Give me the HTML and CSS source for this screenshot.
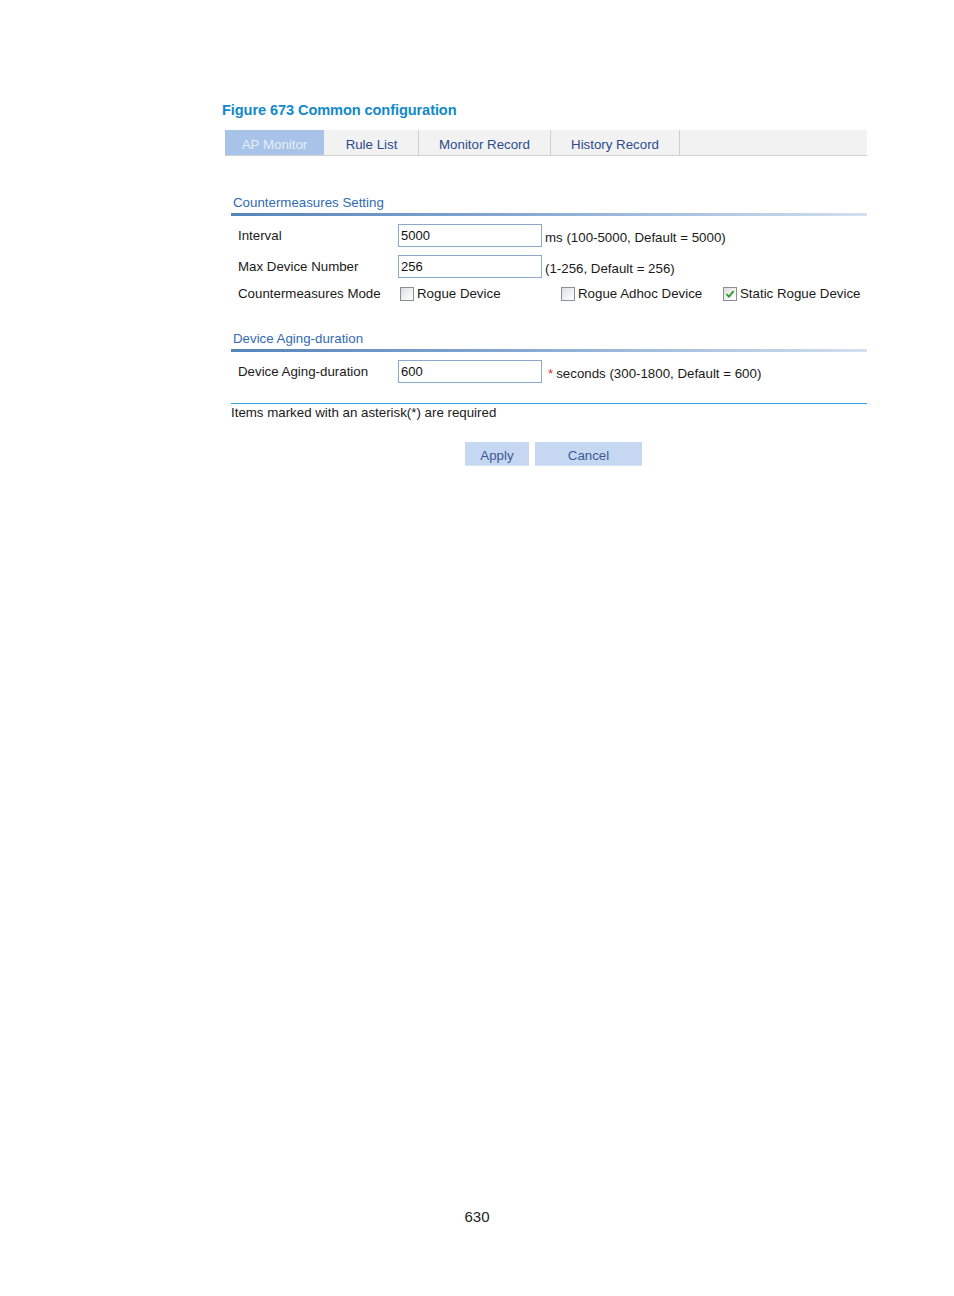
FILE: index.html
```html
<!DOCTYPE html>
<html>
<head>
<meta charset="utf-8">
<title>Figure 673 Common configuration</title>
<link rel="stylesheet" href="styles.css">
</head>
<body>
<div class="page">
  <div class="figure-title">Figure 673 Common configuration</div>
  <div class="tabs">
    <div class="tab active w1">AP Monitor</div>
    <div class="tab w2">Rule List</div>
    <div class="tab w3">Monitor Record</div>
    <div class="tab w4">History Record</div>
  </div>

  <div class="panel">
    <div class="section-head first">Countermeasures Setting</div>
    <div class="rows">
      <div class="row">
        <div class="label">Interval</div>
        <div class="field">5000</div>
        <div class="hint">ms (100-5000, Default = 5000)</div>
      </div>
      <div class="row">
        <div class="label">Max Device Number</div>
        <div class="field">256</div>
        <div class="hint">(1-256, Default = 256)</div>
      </div>
      <div class="row check-row">
        <div class="label">Countermeasures Mode</div>
        <div class="options">
          <div class="opt"><span class="cb"></span><span>Rogue Device</span></div>
          <div class="opt"><span class="cb"></span><span>Rogue Adhoc Device</span></div>
          <div class="opt"><span class="cb checked"><svg viewBox="0 0 12 12" width="12" height="12"><path d="M2.5 6.2 L5 8.7 L9.6 3.2" fill="none" stroke="#2c9a2c" stroke-width="1.8"/></svg></span><span>Static Rogue Device</span></div>
        </div>
      </div>
    </div>

    <div class="section-head second">Device Aging-duration</div>
    <div class="rows">
      <div class="row">
        <div class="label">Device Aging-duration</div>
        <div class="field">600</div>
        <div class="hint req"><span class="star">*</span>seconds (300-1800, Default = 600)</div>
      </div>
    </div>

    <div class="note">Items marked with an asterisk(*) are required</div>

    <div class="buttons">
      <div class="btn apply">Apply</div>
      <div class="btn cancel">Cancel</div>
    </div>
  </div>

  <div class="page-number">630</div>
</div>
</body>
</html>
```

FILE: styles.css
```css
html, body {
  margin: 0;
  padding: 0;
  background: #ffffff;
}

body {
  font-family: "Liberation Sans", Arial, sans-serif;
  font-size: 13.3px;
  color: #1a1a1a;
}

.page {
  width: 954px;
  padding-top: 100px;
}

.figure-title {
  margin-left: 222px;
  font-family: "Liberation Sans", Arial, sans-serif;
  font-weight: bold;
  font-size: 14.6px;
  line-height: 20px;
  color: #1189c9;
  letter-spacing: -0.1px;
}

.tabs {
  margin-top: 10px;
  margin-left: 225px;
  width: 642px;
  height: 25px;
  background: #f2f2f2;
  border-bottom: 1px solid #d2d2d2;
  display: flex;
}

.tab {
  height: 25px;
  line-height: 29px;
  text-align: center;
  color: #2b4b8e;
  border-right: 1px solid #d0d0d0;
  font-size: 13.3px;
}

.tab.active {
  background: #a7c3e8;
  color: #e8eef8;
  border-right: 1px solid #f2f2f2;
}

.w1 { width: 99px; }
.w2 { width: 93px; }
.w3 { width: 131px; }
.w4 { width: 128px; }

.panel {
  margin-left: 231px;
  width: 636px;
}

.section-head {
  padding-left: 2px;
  padding-top: 1px;
  line-height: 16px;
  padding-bottom: 1px;
  color: #2f6bb3;
}

.section-head::after {
  content: "";
  display: block;
  height: 3px;
  margin-top: 2px;
  margin-left: -2px;
  background: linear-gradient(to right, #5784b9 0%, #86a8d1 45%, #d3e0f0 100%);
}

.section-head.first {
  margin-top: 38px;
}

.section-head.second {
  margin-top: 29px;
}

.rows {
  padding-top: 7px;
  display: flex;
  flex-direction: column;
  gap: 8px;
}

.row {
  display: flex;
  align-items: center;
  height: 23px;
}

.row.check-row {
  height: 15px;
}

.label {
  width: 160px;
  padding-left: 7px;
  color: #1a1a1a;
  flex-shrink: 0;
}

.field {
  width: 140px;
  height: 21px;
  line-height: 22px;
  border: 1px solid #8ea8c8;
  padding-left: 2px;
  color: #111;
  font-size: 13px;
  background: #fff;
}

.hint {
  margin-left: 3px;
  padding-top: 4px;
}

.hint.req {
  margin-left: 6px;
}

.star {
  color: #e0302a;
  margin-right: 3px;
}

.options {
  display: grid;
  grid-template-columns: 161px 162px auto;
  margin-left: 2px;
}

.opt {
  display: flex;
  align-items: center;
  gap: 3px;
}

.cb {
  width: 12px;
  height: 12px;
  border: 1px solid #8a8f97;
  background: linear-gradient(135deg, #dcdde0 0%, #f4f4f5 60%, #ffffff 100%);
  display: flex;
  align-items: center;
  justify-content: center;
}

.cb svg {
  display: block;
}

.note {
  margin-top: 20px;
  border-top: 1px solid #2ea2e6;
  padding-top: 1px;
  line-height: 16px;
  color: #1a1a1a;
}

.buttons {
  margin-top: 21px;
  padding-left: 234px;
  display: flex;
  gap: 6px;
}

.btn {
  height: 23px;
  line-height: 28px;
  background: #c6d8f1;
  color: #3b5a97;
  text-align: center;
  border-bottom: 1px solid #d8e4f4;
}

.btn.apply { width: 64px; }
.btn.cancel { width: 107px; }

.page-number {
  margin-top: 742px;
  text-align: center;
  font-size: 15px;
  line-height: 18px;
  color: #222;
}
```
